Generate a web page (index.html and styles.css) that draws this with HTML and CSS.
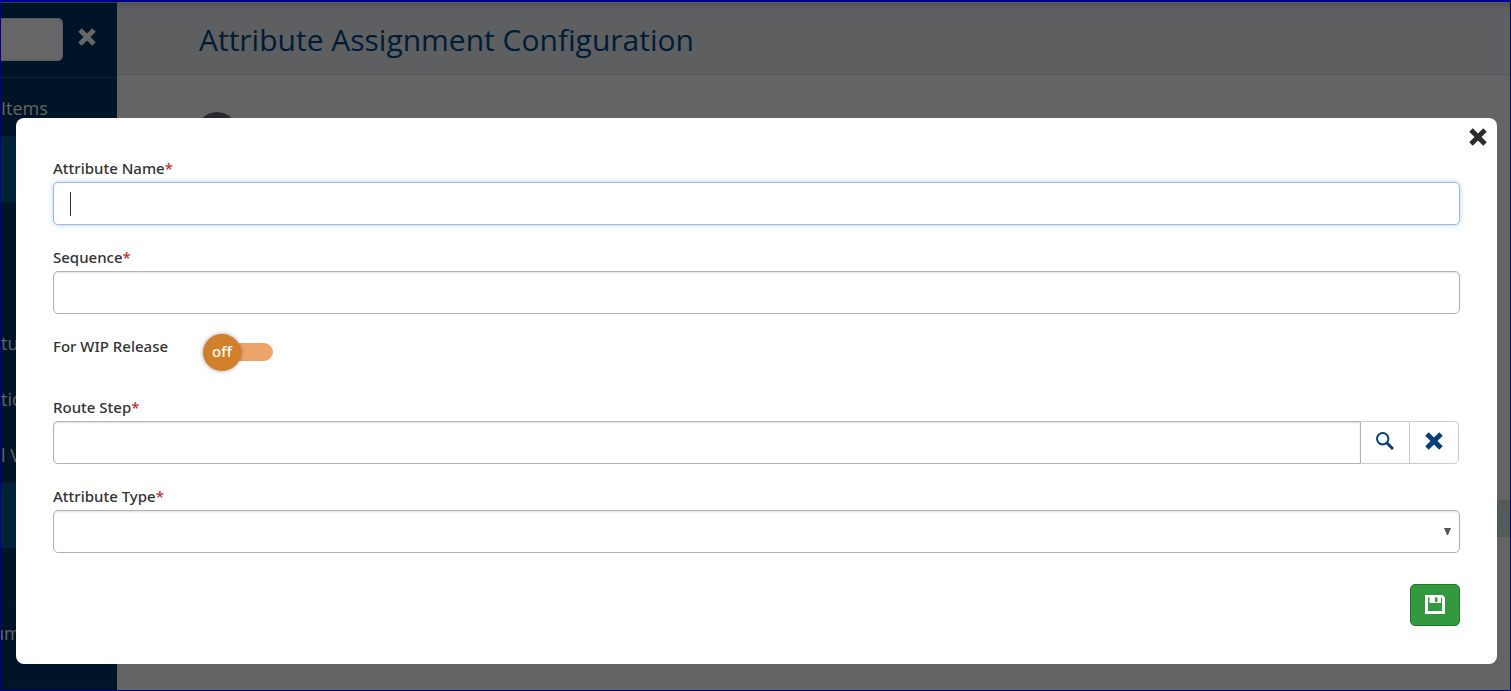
FILE: index.html
```html
<!DOCTYPE html>
<html lang="en">
<head>
<meta charset="utf-8">
<meta name="viewport" content="width=device-width, initial-scale=1">
<title>Attribute Assignment Configuration</title>
<link rel="stylesheet" href="styles.css">
</head>
<body>
<div class="app">
  <nav class="sidebar">
    <div class="search">
      <input class="search-box" type="text" aria-label="Search menu">
      <button class="icon-button search-clear" type="button" aria-label="Clear search">
        <svg class="cross" viewBox="0 0 18 18"><path d="M2 2L16 16M16 2L2 16"/></svg>
      </button>
    </div>
    <ul class="menu">
      <li class="item first">Items</li>
      <li class="item active"></li>
      <li class="item"></li>
      <li class="item"></li>
      <li class="item">tu</li>
      <li class="item">tio</li>
      <li class="item">l V</li>
      <li class="item active"></li>
      <li class="item"></li>
      <li class="item tall clipped">um</li>
    </ul>
  </nav>
  <main class="content">
    <header class="page-header"><h1>Attribute Assignment Configuration</h1></header>
    <section class="page-body">
      <div class="badge"></div>
      <div class="band"></div>
    </section>
  </main>
</div>

<div class="overlay">
  <form class="dialog" role="dialog" aria-label="Attribute">
    <button class="icon-button dialog-close" type="button" aria-label="Close">
      <svg class="cross" viewBox="0 0 18 18"><path d="M2 2L16 16M16 2L2 16"/></svg>
    </button>
    <div class="field">
      <label for="name">Attribute Name<span class="required">*</span></label>
      <div class="focus-wrap">
        <input class="control focused" id="name" type="text">
        <span class="caret"></span>
      </div>
    </div>
    <div class="field">
      <label for="sequence">Sequence<span class="required">*</span></label>
      <input class="control" id="sequence" type="text">
    </div>
    <div class="toggle-row">
      <label for="wip">For WIP Release</label>
      <label class="toggle" for="wip">
        <input class="toggle-input" id="wip" type="checkbox">
        <span class="track"></span>
        <span class="knob">off</span>
      </label>
    </div>
    <div class="field">
      <label for="route">Route Step<span class="required">*</span></label>
      <div class="group">
        <input class="control group-input" id="route" type="text">
        <button class="addon" type="button" aria-label="Search">
          <svg class="lens" viewBox="0 0 18 18"><circle cx="6.7" cy="6.7" r="5.7"/><path class="handle" d="M11 11L17 17"/></svg>
        </button>
        <button class="addon addon-last" type="button" aria-label="Clear">
          <svg class="cross" viewBox="0 0 18 18"><path d="M2 2L16 16M16 2L2 16"/></svg>
        </button>
      </div>
    </div>
    <div class="field">
      <label for="type">Attribute Type<span class="required">*</span></label>
      <div class="select-wrap">
        <select class="control" id="type"><option></option></select>
        <svg class="arrow" viewBox="0 0 7 7"><path d="M0 0H7L4 7H3Z"/></svg>
      </div>
    </div>
    <div class="actions">
      <button class="save" type="submit" aria-label="Save">
        <svg viewBox="0 0 20 19"><path fill-rule="evenodd" d="M0 0H17.5L20 2.5V19H0ZM3 2.5V16H17V3L16 2.500V8H4.500V2.500ZM10 2.500V7H12.500V2.500Z"/></svg>
      </button>
    </div>
  </form>
</div>
</body>
</html>
```
FILE: styles.css
```css
* { box-sizing: border-box; }

body {
  margin: 0;
  font-family: "Noto Sans", "Open Sans", sans-serif;
  color: #333;
}

button, input, select { font: inherit; }

.app {
  display: flex;
  height: 100vh;
  overflow: hidden;
  border: 1px solid #00008b;
  border-top-width: 2px;
  background: #646464;
  font-family: "Open Sans", "Noto Sans", sans-serif;
}

.sidebar {
  flex: none;
  width: 116px;
  background: #001428;
  border-top: 1px solid #3a3c3e;
}

.search {
  display: flex;
  align-items: center;
  height: 75px;
  padding-bottom: 2px;
  border-bottom: 1px solid #0a2638;
}

.search-box {
  width: 62px;
  height: 43px;
  padding: 0 8px;
  border: 1px solid #5a5a5a;
  border-left: 0;
  border-radius: 0 5px 5px 0;
  background: #666;
  outline: 0;
}

.icon-button {
  display: flex;
  padding: 0;
  border: 0;
  background: none;
}

.search-clear { margin-left: 15px; }

.cross {
  width: 18px;
  height: 18px;
  fill: none;
  stroke: currentColor;
  stroke-width: 5;
  overflow: visible;
}

.search-clear .cross { color: #666; margin-bottom: 4px; }

.menu {
  margin: 0;
  padding: 0;
  list-style: none;
  font-size: 18px;
  color: #646464;
}

.item {
  display: flex;
  align-items: center;
  height: 56px;
  border-bottom: 1px solid #06192b;
  white-space: nowrap;
  overflow: hidden;
}

.first { height: 59px; padding-top: 2px; border-bottom-color: #062636; }
.active { height: 66px; background: #002136; }
.tall { height: 82px; padding-bottom: 26px; }
.clipped { text-indent: -8px; }

.content {
  flex: 1;
  display: flex;
  flex-direction: column;
}

.page-header {
  display: flex;
  align-items: center;
  height: 73px;
  padding: 2px 82px 0;
  border-top: 1px solid #5e5e5e;
  border-bottom: 1px solid #56595b;
  background: linear-gradient(#4f5152, #5d5f61 6px);
}

h1 {
  margin: 0;
  font-size: 30px;
  font-weight: 400;
  color: #001c35;
}

.page-body { flex: 1; }

.badge {
  width: 40px;
  height: 40px;
  margin: 37px 0 0 80px;
  border-radius: 50%;
  background: #2a282e;
}

.band {
  height: 37px;
  margin-top: 348px;
  background: #54595c;
}

.overlay {
  position: absolute;
  inset: 0;
  padding: 118px 14px 0 16px;
}

.dialog {
  position: relative;
  display: flex;
  flex-direction: column;
  padding: 38px 37px;
  border-radius: 8px;
  background: #fff;
}

.dialog-close {
  position: absolute;
  top: 10px;
  right: 10px;
  color: #2c2c2c;
}

.field {
  display: flex;
  flex-direction: column;
  gap: 1px;
  margin-bottom: 20px;
}

label {
  font-size: 15px;
  font-weight: 500;
  line-height: 25px;
}

.required { color: #c9302c; }

.control {
  display: block;
  width: 100%;
  height: 43px;
  padding: 0 16px;
  border: 1px solid #b2b2b2;
  border-radius: 5px;
  background: #fff;
  box-shadow: inset 0 1px 2px rgba(0, 0, 0, .12);
  outline: 0;
  appearance: none;
}

.focused {
  border-color: #9db9d5;
  box-shadow: 0 0 5px rgba(102, 175, 233, .5);
}

.focus-wrap, .select-wrap { position: relative; }

.caret {
  position: absolute;
  left: 17px;
  top: 10px;
  width: 1px;
  height: 24px;
  background: #333;
}

.toggle-row {
  display: flex;
  gap: 35px;
  height: 61px;
}

.toggle {
  position: relative;
  width: 70px;
  height: 37px;
}

.toggle-input {
  position: absolute;
  opacity: 0;
}

.track {
  position: absolute;
  inset: 9px 0 10px 20px;
  border-radius: 9px;
  background: #eca669;
}

.knob {
  position: absolute;
  left: 0;
  top: 0;
  width: 38px;
  height: 37px;
  border-radius: 50%;
  background: #d17f2a;
  box-shadow: 0 0 4px rgba(0, 0, 0, .4);
  color: #fff;
  line-height: 34px;
  text-align: center;
}

.group { display: flex; padding-right: 1px; }
.group-input { flex: 1; min-width: 0; border-radius: 5px 0 0 5px; }

.addon {
  display: flex;
  align-items: center;
  justify-content: center;
  width: 49px;
  padding: 0 0 3px;
  border: 1px solid #ccc;
  border-left: 0;
  background: #fff;
  color: #043f78;
}

.addon-last { border-radius: 0 5px 5px 0; }

.lens {
  width: 18px;
  height: 18px;
  fill: none;
  stroke: currentColor;
  stroke-width: 2;
}

.handle { stroke-width: 3; }

.arrow {
  position: absolute;
  right: 9px;
  top: 18px;
  width: 7px;
  height: 7px;
  fill: #555;
  pointer-events: none;
}

.actions {
  display: flex;
  justify-content: flex-end;
  padding-top: 11px;
}

.save {
  display: flex;
  align-items: center;
  justify-content: center;
  width: 50px;
  height: 42px;
  padding: 0 0 1px;
  border: 1px solid #25752e;
  border-radius: 5px;
  background: #33993f;
}

.save svg { width: 20px; height: 19px; fill: #fff; }
```
